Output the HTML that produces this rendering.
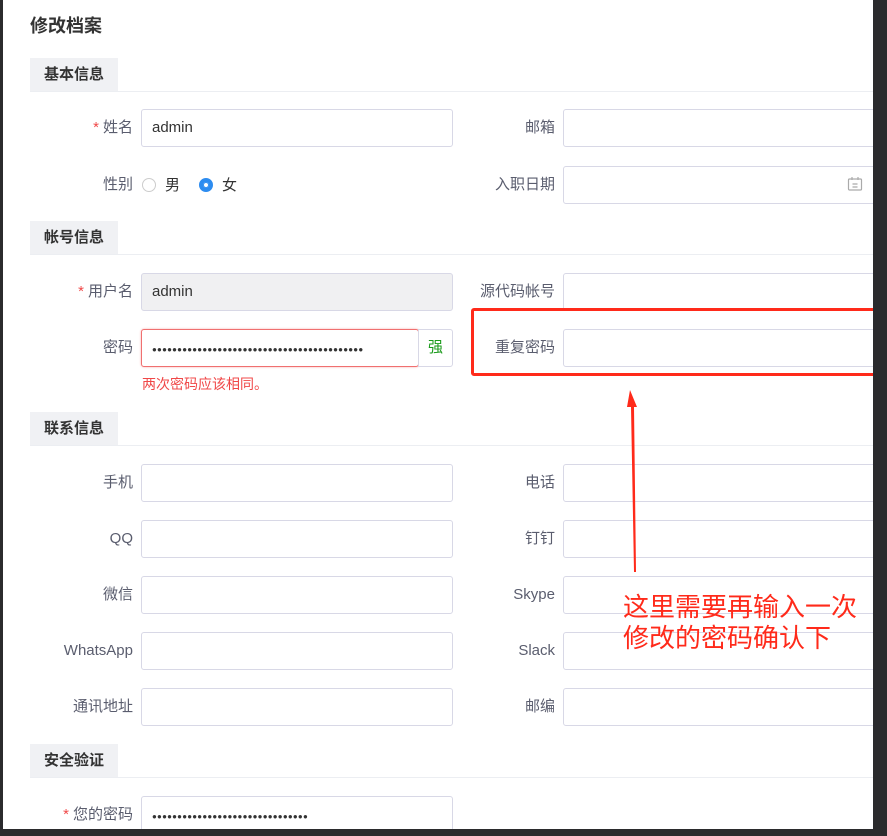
<!DOCTYPE html>
<html><head><meta charset="utf-8"><style>
*{box-sizing:border-box;margin:0;padding:0}
body{width:887px;height:836px;background:#2b2b2d;position:relative;overflow:hidden;font-family:"Liberation Sans","Noto Sans CJK SC",sans-serif;}
#pg{position:absolute;left:3px;top:0;width:870px;height:829px;background:#fff;overflow:hidden}
.a{position:absolute}
.h{position:absolute;left:27px;height:33px;width:88px;background:#f0f1f4;font-weight:bold;font-size:15px;color:#333;line-height:33px;padding-left:14px}
.hl{position:absolute;left:27px;right:0;height:1px;background:#eceef2}
.lb{position:absolute;width:120px;text-align:right;font-size:15px;color:#5a5d6e;line-height:38px;height:38px}
.lb i{color:#f04848;font-style:normal;margin-right:4px}
.in{position:absolute;height:38px;border:1px solid #d8d8e6;border-radius:3px;background:#fff;font-size:15px;color:#333;line-height:36px;padding-left:10px}
.L{left:138px;width:312px}
.R{left:560px;width:330px}
.dots{font-size:8px;letter-spacing:0.2px;color:#333}
</style></head><body>
<div id="pg">
<div class="a" style="left:27px;top:12px;font-size:18px;font-weight:bold;color:#333">修改档案</div>

<div class="h" style="top:58px">基本信息</div><div class="hl" style="top:91px"></div>
<div class="lb" style="left:10px;top:109px"><i>*</i>姓名</div><div class="in L" style="top:109px">admin</div>
<div class="lb" style="left:432px;top:109px">邮箱</div><div class="in R" style="top:109px"></div>
<div class="lb" style="left:10px;top:166px">性别</div>
<div class="a" style="left:139px;top:178px;width:14px;height:14px;border:1px solid #ccc;border-radius:50%"></div>
<div class="a" style="left:162px;top:174px;font-size:15px;color:#333">男</div>
<div class="a" style="left:196px;top:178px;width:14px;height:14px;border:4px solid #2d8cf0;border-radius:50%;box-shadow:0 0 0 1px #2d8cf0 inset"></div>
<div class="a" style="left:219px;top:174px;font-size:15px;color:#333">女</div>
<div class="lb" style="left:432px;top:166px">入职日期</div><div class="in R" style="top:166px"></div>
<svg class="a" style="left:844px;top:176px" width="16" height="16" viewBox="0 0 16 16" fill="none" stroke="#aaa" stroke-width="1.2"><rect x="1.5" y="3" width="13" height="11" rx="1"/><path d="M5 1v3M11 1v3M5.5 8h5M5.5 11h5"/></svg>

<div class="h" style="top:221px">帐号信息</div><div class="hl" style="top:254px"></div>
<div class="lb" style="left:10px;top:273px"><i>*</i>用户名</div><div class="in L" style="top:273px;background:#f0f0f2">admin</div>
<div class="lb" style="left:432px;top:273px">源代码帐号</div><div class="in R" style="top:273px"></div>
<div class="lb" style="left:10px;top:329px">密码</div>
<div class="in" style="left:138px;top:329px;width:278px;border-color:#f07070;box-shadow:0 0 2px #f8b0b0;overflow:hidden;white-space:nowrap"><span class="dots">●●●●●●●●●●●●●●●●●●●●●●●●●●●●●●●●●●●●●●●●●●</span></div>
<div class="in" style="left:415px;top:329px;width:35px;padding:0;text-align:center;color:#1a9a1a;border-radius:0 3px 3px 0">强</div>
<div class="a" style="left:139px;top:374px;font-size:14px;color:#f04848">两次密码应该相同。</div>
<div class="lb" style="left:432px;top:329px">重复密码</div><div class="in R" style="top:329px"></div>

<div class="h" style="top:412px">联系信息</div><div class="hl" style="top:445px"></div>
<div class="lb" style="left:10px;top:464px">手机</div><div class="in L" style="top:464px"></div>
<div class="lb" style="left:432px;top:464px">电话</div><div class="in R" style="top:464px"></div>
<div class="lb" style="left:10px;top:520px">QQ</div><div class="in L" style="top:520px"></div>
<div class="lb" style="left:432px;top:520px">钉钉</div><div class="in R" style="top:520px"></div>
<div class="lb" style="left:10px;top:576px">微信</div><div class="in L" style="top:576px"></div>
<div class="lb" style="left:432px;top:576px">Skype</div><div class="in R" style="top:576px"></div>
<div class="lb" style="left:10px;top:632px">WhatsApp</div><div class="in L" style="top:632px"></div>
<div class="lb" style="left:432px;top:632px">Slack</div><div class="in R" style="top:632px"></div>
<div class="lb" style="left:10px;top:688px">通讯地址</div><div class="in L" style="top:688px"></div>
<div class="lb" style="left:432px;top:688px">邮编</div><div class="in R" style="top:688px"></div>

<div class="h" style="top:744px">安全验证</div><div class="hl" style="top:777px"></div>
<div class="lb" style="left:10px;top:796px"><i>*</i>您的密码</div>
<div class="in L" style="top:796px"><span class="dots">●●●●●●●●●●●●●●●●●●●●●●●●●●●●●●●</span></div>

<div class="a" style="left:468px;top:308px;width:406px;height:68px;border:3px solid #ff2a1a;border-radius:3px"></div>
<svg class="a" style="left:0;top:0" width="870" height="829"><polygon points="630,390 637,407 634,407 636,572 634,572 631,407 627,407" fill="#ff2a1a" transform="translate(-3,0)"/></svg>
<div class="a" style="left:620px;top:592px;font-size:26px;line-height:31px;color:#ff2a1a;white-space:nowrap">这里需要再输入一次<br>修改的密码确认下</div>
</div>
</body></html>
